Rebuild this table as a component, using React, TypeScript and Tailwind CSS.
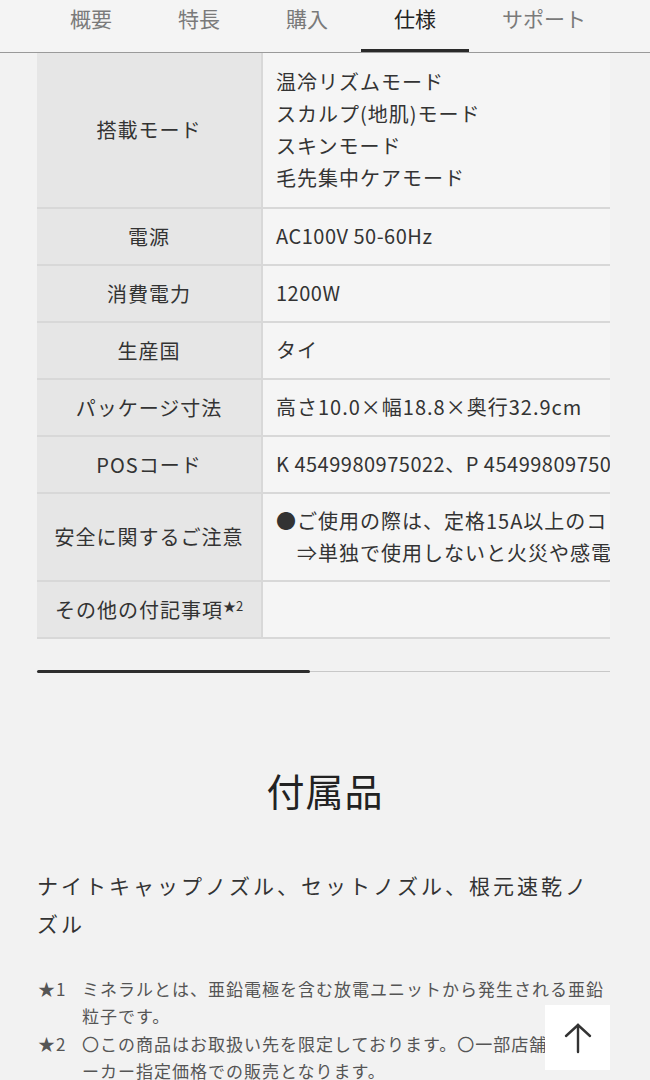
import React from 'react';

const font = { fontFamily: '"Noto Sans CJK JP", "Noto Sans", sans-serif' };

const tabs = ['概要', '特長', '購入', '仕様', 'サポート'];

const specs: { label: React.ReactNode; lines: string[] }[] = [
  {
    label: '搭載モード',
    lines: ['温冷リズムモード', 'スカルプ(地肌)モード', 'スキンモード', '毛先集中ケアモード'],
  },
  { label: '電源', lines: ['AC100V 50-60Hz'] },
  { label: '消費電力', lines: ['1200W'] },
  { label: '生産国', lines: ['タイ'] },
  { label: 'パッケージ寸法', lines: ['高さ10.0×幅18.8×奥行32.9cm'] },
  { label: 'POSコード', lines: ['K 4549980975022、P 4549980975039'] },
  {
    label: '安全に関するご注意',
    lines: [
      '●ご使用の際は、定格15A以上のコンセントを単独で使用してください。',
      '\u3000⇒単独で使用しないと火災や感電の原因になります。',
    ],
  },
  {
    label: (
      <>
        その他の付記事項<sup className="text-[13px] -top-[0.5em] tracking-normal">★2</sup>
      </>
    ),
    lines: [],
  },
];

const Header: React.FC = () => (
  <header className="h-[53px] bg-[#f4f4f4] border-b border-[#9a9a9a] flex pl-[37px]">
    {tabs.map((t) => {
      const active = t === '仕様';
      return (
        <div
          key={t}
          className={`relative px-[33px] h-full flex items-center text-[21px] ${
            active ? 'text-[#222]' : 'text-[#7a7a7a]'
          }`}
        >
          <span className="-mt-[14px]">{t}</span>
          {active && <div className="absolute left-0 right-0 bottom-0 h-[3px] bg-[#2a2a2a]" />}
        </div>
      );
    })}
  </header>
);

const SpecTable: React.FC = () => (
  <div className="mx-[37px] w-[573px] overflow-hidden">
    <div className="w-[900px]">
      {specs.map((row, i) => (
        <div key={i} className="flex border-b-2 border-[#d8d8d8]">
          <div className="w-[226px] shrink-0 bg-[#e6e6e6] border-r-2 border-[#d8d8d8] flex items-center justify-center text-center text-[20px] tracking-[1px] text-[#333]">
            <span>{row.label}</span>
          </div>
          <div
            className={`flex-1 bg-[#f5f5f5] pl-[13px] min-h-[55px] text-[20px] leading-[32px] tracking-[1px] text-[#333] whitespace-nowrap ${
              i === 0 ? 'py-[13px]' : 'py-[11px]'
            }`}
          >
            {row.lines.map((l, j) => (
              <div key={j} className={l.match(/^[A-Z0-9]/) ? 'tracking-[0.5px]' : ''}>
                {l}
              </div>
            ))}
          </div>
        </div>
      ))}
    </div>
  </div>
);

const ScrollTrack: React.FC = () => (
  <div className="mx-[37px] mt-[31px] w-[573px] h-[3px] flex items-center">
    <div className="w-[273px] h-[3px] bg-[#2e2e2e] rounded-full" />
    <div className="flex-1 h-px bg-[#c8c8c8]" />
  </div>
);

const Footnote: React.FC<{ mark: string; children: React.ReactNode }> = ({ mark, children }) => (
  <div className="flex">
    <div className="w-[44px] shrink-0">{mark}</div>
    <div className="flex-1">{children}</div>
  </div>
);

export default function App() {
  return (
    <div className="min-h-screen bg-[#f2f2f2] text-[#333]" style={font}>
      <Header />
      <SpecTable />
      <ScrollTrack />

      <h2 className="mt-[95px] text-center text-[38px] leading-[44px] tracking-[1px] text-[#222]">付属品</h2>

      <p className="mx-[37px] mt-[54px] w-[573px] text-[21px] leading-[38px] tracking-[3px] text-[#333]">
        ナイトキャップノズル、セットノズル、根元速乾ノズル
      </p>

      <div className="mx-[38px] mt-[33px] text-[17px] leading-[27.4px] tracking-[1px] text-[#555]">
        <Footnote mark="★1">ミネラルとは、亜鉛電極を含む放電ユニットから発生される亜鉛粒子です。</Footnote>
        <Footnote mark="★2">
          〇この商品はお取扱い先を限定しております。〇一部店舗ではメーカー指定価格での販売となります。
        </Footnote>
      </div>

      <button className="fixed right-[40px] bottom-[10px] w-[65px] h-[65px] bg-white flex items-center justify-center">
        <svg width="28" height="32" viewBox="0 0 28 32" fill="none" stroke="#333" strokeWidth="2.4" strokeLinecap="round">
          <path d="M14 3 V30" />
          <path d="M2 14 L14 3 L26 14" />
        </svg>
      </button>
    </div>
  );
}
